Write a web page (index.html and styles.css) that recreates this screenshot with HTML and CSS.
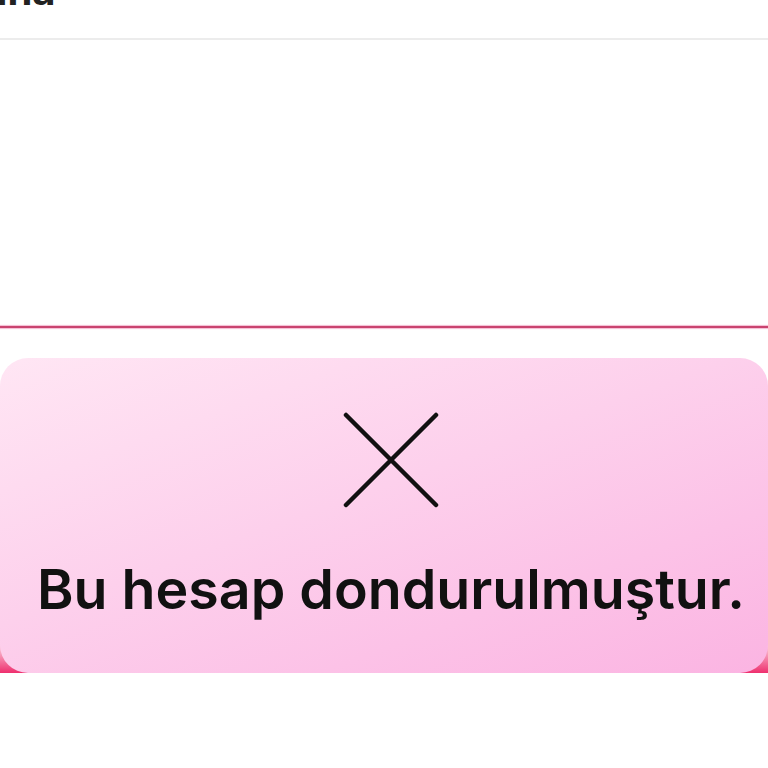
FILE: index.html
```html
<!DOCTYPE html>
<html lang="tr">
<head>
<meta charset="utf-8">
<link rel="stylesheet" href="styles.css">
</head>
<body>
<div class="page">
  <header class="topbar"><span class="title">Hesabına</span></header>
  <div class="blank"></div>
  <div class="accent-line"></div>
  <div class="notice-wrap">
    <div class="notice">
      <svg class="close-icon" viewBox="0 0 96 96" width="96" height="96" aria-hidden="true">
        <path d="M3 3 L93 93 M93 3 L3 93" stroke="#111" stroke-width="4.5" stroke-linecap="round" fill="none"/>
      </svg>
      <p class="message">Bu hesap dondurulmuştur.</p>
    </div>
  </div>
</div>
</body>
</html>
```
FILE: styles.css
```css
html, body {
  margin: 0;
  padding: 0;
  background: #ffffff;
  overflow: hidden;
}
.page {
  width: 768px;
  height: 768px;
  display: flex;
  flex-direction: column;
  font-family: Inter, "Noto Sans", "Liberation Sans", Arial, sans-serif;
}
.topbar {
  height: 38px;
  border-bottom: 2px solid #ececec;
  display: flex;
  align-items: flex-start;
  overflow: hidden;
}
.title {
  font-size: 40px;
  font-weight: 700;
  color: #222;
  line-height: 1;
  margin-top: -29px;
  margin-left: -128px;
}
.blank {
  height: 286px;
}
.accent-line {
  height: 2px;
  background: #c9446f;
  box-shadow: 0 0 1px 1px rgba(240, 140, 180, 0.6);
}
.notice-wrap {
  margin-top: 30px;
  position: relative;
  height: 315px;
}
.notice-wrap::before {
  content: "";
  position: absolute;
  left: -20px;
  right: -20px;
  bottom: 0;
  height: 36px;
  background: linear-gradient(180deg, rgba(240, 48, 106, 0) 0%, #ee2f6e 100%);
}
.notice {
  position: relative;
  height: 100%;
  box-sizing: border-box;
  border-radius: 28px;
  background: linear-gradient(160deg, #ffe6f4 0%, #fdd0ec 45%, #fbb4e2 100%);
  display: flex;
  flex-direction: column;
  align-items: center;
  padding: 54px 0 0 14px;
}
.close-icon {
  display: block;
  width: 96px;
  height: 96px;
}
.message {
  margin: 53px 0 0 0;
  font-size: 55.5px;
  font-weight: 600;
  color: #111;
  line-height: 1;
  letter-spacing: 0;
  white-space: nowrap;
}
```
